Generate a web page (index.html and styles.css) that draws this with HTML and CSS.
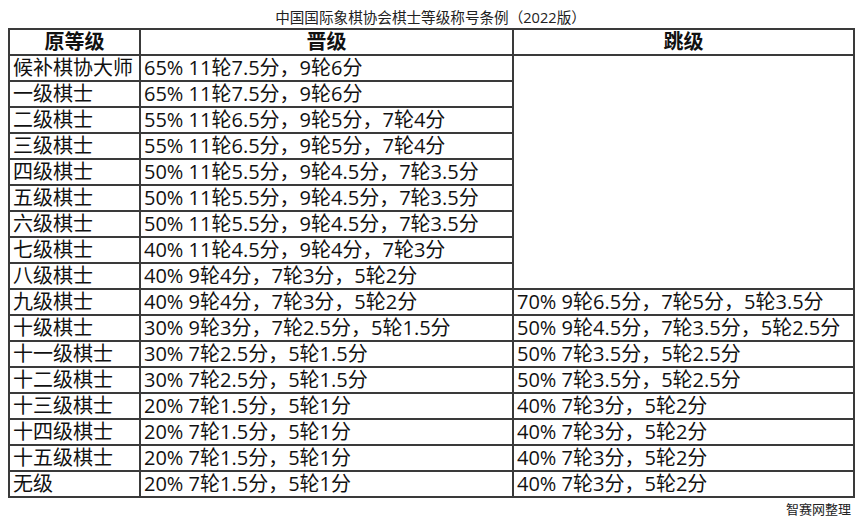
FILE: index.html
```html
<!DOCTYPE html>
<html lang="zh-CN">
<head>
<meta charset="utf-8">
<title>中国国际象棋协会棋士等级称号条例（2022版）</title>
<link rel="stylesheet" href="styles.css">
</head>
<body>
<div class="page">
  <div class="title">中国国际象棋协会棋士等级称号条例（2022版）</div>
  <table class="grid">
    <colgroup>
      <col class="c1"><col class="c2"><col class="c3">
    </colgroup>
    <thead>
      <tr class="head"><th>原等级</th><th>晋级</th><th>跳级</th></tr>
    </thead>
    <tbody>
      <tr><td>候补棋协大师</td><td>65% 11轮7.5分，9轮6分</td><td class="empty" rowspan="9"></td></tr>
      <tr><td>一级棋士</td><td>65% 11轮7.5分，9轮6分</td></tr>
      <tr><td>二级棋士</td><td>55% 11轮6.5分，9轮5分，7轮4分</td></tr>
      <tr><td>三级棋士</td><td>55% 11轮6.5分，9轮5分，7轮4分</td></tr>
      <tr><td>四级棋士</td><td>50% 11轮5.5分，9轮4.5分，7轮3.5分</td></tr>
      <tr><td>五级棋士</td><td>50% 11轮5.5分，9轮4.5分，7轮3.5分</td></tr>
      <tr><td>六级棋士</td><td>50% 11轮5.5分，9轮4.5分，7轮3.5分</td></tr>
      <tr><td>七级棋士</td><td>40% 11轮4.5分，9轮4分，7轮3分</td></tr>
      <tr><td>八级棋士</td><td>40% 9轮4分，7轮3分，5轮2分</td></tr>
      <tr><td>九级棋士</td><td>40% 9轮4分，7轮3分，5轮2分</td><td>70% 9轮6.5分，7轮5分，5轮3.5分</td></tr>
      <tr><td>十级棋士</td><td>30% 9轮3分，7轮2.5分，5轮1.5分</td><td>50% 9轮4.5分，7轮3.5分，5轮2.5分</td></tr>
      <tr><td>十一级棋士</td><td>30% 7轮2.5分，5轮1.5分</td><td>50% 7轮3.5分，5轮2.5分</td></tr>
      <tr><td>十二级棋士</td><td>30% 7轮2.5分，5轮1.5分</td><td>50% 7轮3.5分，5轮2.5分</td></tr>
      <tr><td>十三级棋士</td><td>20% 7轮1.5分，5轮1分</td><td>40% 7轮3分，5轮2分</td></tr>
      <tr><td>十四级棋士</td><td>20% 7轮1.5分，5轮1分</td><td>40% 7轮3分，5轮2分</td></tr>
      <tr><td>十五级棋士</td><td>20% 7轮1.5分，5轮1分</td><td>40% 7轮3分，5轮2分</td></tr>
      <tr><td>无级</td><td>20% 7轮1.5分，5轮1分</td><td>40% 7轮3分，5轮2分</td></tr>
    </tbody>
  </table>
  <div class="credit">智赛网整理</div>
</div>
</body>
</html>
```

FILE: styles.css
```css
html, body {
  margin: 0;
  padding: 0;
  background: #ffffff;
}
body {
  font-family: "Open Sans", "Noto Sans CJK SC", sans-serif;
  color: #111111;
}
.page {
  width: 845px;
  padding: 7px 8px 0 8px;
  display: flex;
  flex-direction: column;
}
.title {
  font-size: 14.6px;
  line-height: 20px;
  height: 21px;
  text-align: center;
  color: #222222;
}
.grid {
  width: 845px;
  border-collapse: collapse;
  table-layout: fixed;
  border: 2px solid #3a3a3a;
}
.c1 { width: 131px; }
.c2 { width: 373px; }
.c3 { width: 341px; }
.grid th, .grid td {
  border: 2px solid #3a3a3a;
  padding: 0 0 0 3px;
  font-size: 20px;
  line-height: 22px;
  height: 22px;
  text-align: left;
  white-space: nowrap;
  overflow: hidden;
  vertical-align: middle;
  box-sizing: border-box;
}
.grid tr { height: 26px; }
.grid .head { height: 26px; }
.grid th {
  font-weight: bold;
  text-align: center;
  padding: 0;
}
.credit {
  font-size: 13px;
  line-height: 18px;
  text-align: right;
  padding-top: 2px;
  padding-right: 2px;
  color: #222222;
}
```
